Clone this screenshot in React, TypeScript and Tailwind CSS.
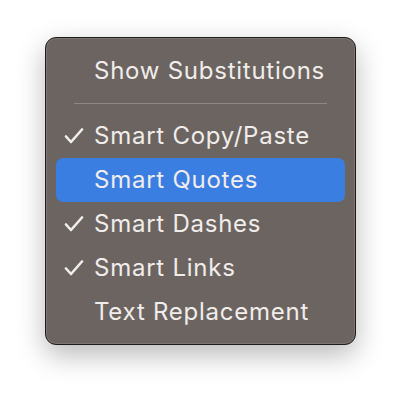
import React from 'react';

interface Item {
  label: string;
  checked?: boolean;
  active?: boolean;
}

const items: Item[] = [
  {label: 'Smart Copy/Paste', checked: true},
  {label: 'Smart Quotes', active: true},
  {label: 'Smart Dashes', checked: true},
  {label: 'Smart Links', checked: true},
  {label: 'Text Replacement'},
];

const Check = () => (
  <svg width="20" height="16" viewBox="0 0 20 16" className="absolute left-[8px] top-[14px]">
    <path d="M2 8.5 L7 14 L18 1.5" fill="none" stroke="#f1edeb" strokeWidth="2.6" strokeLinecap="round" strokeLinejoin="round" />
  </svg>
);

const Row = ({item}: {item: Item}) => (
  <div className={`relative h-[44px] flex items-center pl-[38px] rounded-[7px] ${item.active ? 'bg-[#3b7ee1]' : ''}`}>
    {item.checked && <Check />}
    <span className="text-[24px] text-[#f1edeb] tracking-[0.75px]">{item.label}</span>
  </div>
);

export default function App() {
  return (
    <div className="w-[402px] h-[398px] bg-white pt-[37px] pl-[45px]" style={{fontFamily: 'Inter, "Noto Sans", sans-serif'}}>
      <div className="w-[311px] h-[308px] rounded-[11px] border border-[#1e1c1b] bg-[#6b6461] shadow-[0_10px_28px_rgba(0,0,0,0.28),inset_0_0_0_1px_rgba(255,255,255,0.12)] px-[10px] pt-[11px]">
        <div className="h-[44px] flex items-center pl-[38px]">
          <span className="text-[24px] text-[#f1edeb] tracking-[0.75px]">Show Substitutions</span>
        </div>
        <div className="h-[21px] flex items-center px-[18px]">
          <div className="h-px w-full bg-[#8f8784]" />
        </div>
        {items.map((item) => (
          <Row key={item.label} item={item} />
        ))}
      </div>
    </div>
  );
}
